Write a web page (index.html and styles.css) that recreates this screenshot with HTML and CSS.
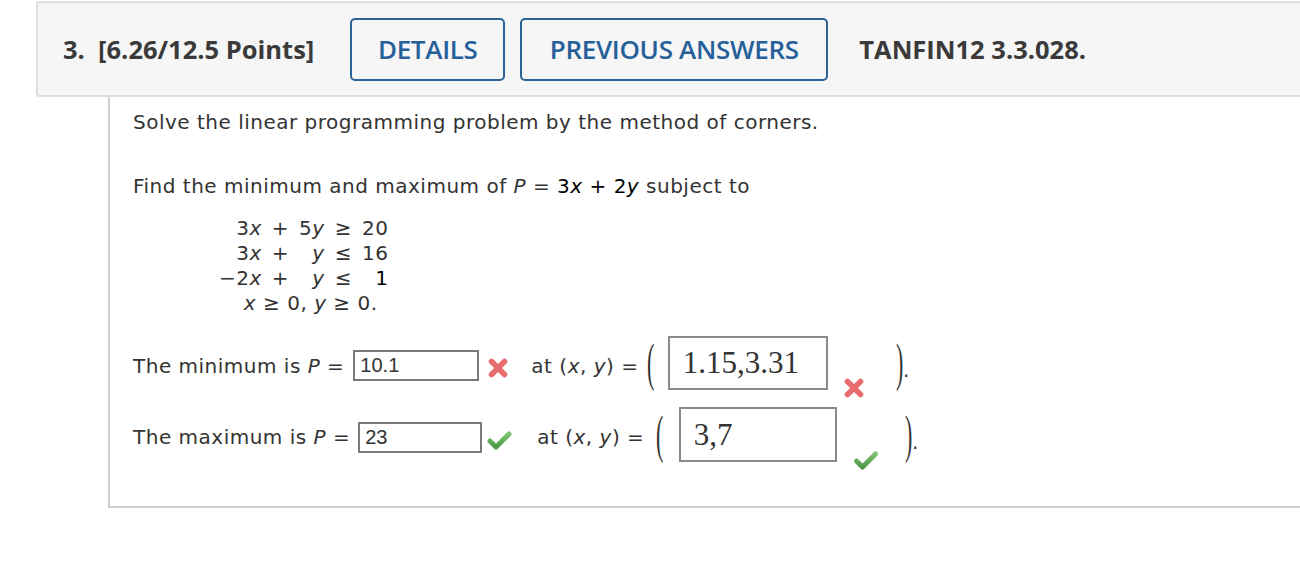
FILE: index.html
```html
<!DOCTYPE html>
<html>
<head>
<meta charset="utf-8">
<link rel="stylesheet" href="styles.css">
</head>
<body>
<div class="page">
  <div class="header">
    <div class="title">3.&nbsp; [6.26/12.5 Points]</div>
    <div class="btn btn-details">DETAILS</div>
    <div class="btn btn-prev">PREVIOUS ANSWERS</div>
    <div class="code">TANFIN12 3.3.028.</div>
  </div>
  <div class="content">
    <p class="line intro">Solve the linear programming problem by the method of corners.</p>
    <p class="line find">Find the minimum and maximum of <i>P</i> = <span class="m">3<i>x</i> + 2<i>y</i></span> subject to</p>
    <div class="cons">
      <span class="c1">3<i>x</i></span><span class="c2">+</span><span class="c3">5<i>y</i></span><span class="c4">≥</span><span class="c5">20</span>
      <span class="c1">3<i>x</i></span><span class="c2">+</span><span class="c3"><i>y</i></span><span class="c4">≤</span><span class="c5">16</span>
      <span class="c1">−2<i>x</i></span><span class="c2">+</span><span class="c3"><i>y</i></span><span class="c4">≤</span><span class="c5 blk">1</span>
      <span class="call"><i>x</i> ≥ 0, <i>y</i> ≥ 0.</span>
    </div>
    <div class="ansrow row-min">
      <span class="lbl">The minimum is <i>P</i> =</span>
      <span class="inp inp-min">10.1</span>
      <span class="ico ico-x1"><svg width="22" height="22" viewBox="0 0 22 22"><path d="M4.5 4.5 L17.5 17.5 M17.5 4.5 L4.5 17.5" stroke="#e65b5d" stroke-width="5.5" stroke-linecap="round" fill="none" opacity="0.9"/></svg></span>
      <span class="at">at (<i>x</i>, <i>y</i>) =</span>
      <span class="paren po">(</span>
      <span class="box box-min">1.15,3.31</span>
      <span class="ico ico-x2"><svg width="22" height="22" viewBox="0 0 22 22"><path d="M4.5 4.5 L17.5 17.5 M17.5 4.5 L4.5 17.5" stroke="#e65b5d" stroke-width="5.5" stroke-linecap="round" fill="none" opacity="0.9"/></svg></span>
      <span class="paren pc">)</span><span class="dot">.</span>
    </div>
    <div class="ansrow row-max">
      <span class="lbl">The maximum is <i>P</i> =</span>
      <span class="inp inp-max">23</span>
      <span class="ico ico-c1"><svg width="27" height="22" viewBox="0 0 27 22"><defs><linearGradient id="g1" x1="0" y1="0" x2="0" y2="1"><stop offset="0" stop-color="#7cc06f"/><stop offset="1" stop-color="#4f9a4a"/></linearGradient></defs><path d="M4 12 L10 18 L23 5" stroke="url(#g1)" stroke-width="5" stroke-linecap="round" stroke-linejoin="round" fill="none"/></svg></span>
      <span class="at">at (<i>x</i>, <i>y</i>) =</span>
      <span class="paren po">(</span>
      <span class="box box-max">3,7</span>
      <span class="ico ico-c2"><svg width="28" height="22" viewBox="0 0 27 22"><defs><linearGradient id="g2" x1="0" y1="0" x2="0" y2="1"><stop offset="0" stop-color="#7cc06f"/><stop offset="1" stop-color="#4f9a4a"/></linearGradient></defs><path d="M4 12 L10 18 L23 5" stroke="url(#g2)" stroke-width="5" stroke-linecap="round" stroke-linejoin="round" fill="none"/></svg></span>
      <span class="paren pc">)</span><span class="dot">.</span>
    </div>
  </div>
</div>
</body>
</html>
```
FILE: styles.css
```css
html, body {
  margin: 0;
  padding: 0;
  background: #ffffff;
  overflow: hidden;
}
.page {
  width: 1330px;
  padding-top: 1px;
}
.header {
  margin-left: 36px;
  height: 92px;
  background: #f6f6f6;
  border: 2px solid #dedede;
  border-radius: 3px;
  display: flex;
  align-items: center;
  font-family: "Open Sans", sans-serif;
}
.title {
  margin-left: 25px;
  font-weight: 700;
  font-size: 25.5px;
  color: #3a3a3a;
}
.btn {
  box-sizing: border-box;
  height: 63px;
  border: 2px solid #2b6397;
  border-radius: 5px;
  display: flex;
  align-items: center;
  justify-content: center;
  color: #25609a;
  font-weight: 600;
  font-size: 26px;
  letter-spacing: -0.3px;
}
.btn-details {
  margin-left: 36px;
  width: 155px;
}
.btn-prev {
  margin-left: 15px;
  width: 308px;
}
.code {
  margin-left: 31px;
  font-weight: 700;
  font-size: 25.5px;
  color: #3a3a3a;
}
.content {
  margin-left: 108px;
  height: 411px;
  border-left: 2px solid #d0d0d0;
  border-bottom: 2px solid #d0d0d0;
  padding-left: 23px;
  box-sizing: border-box;
  font-family: "DejaVu Sans", Verdana, sans-serif;
  font-size: 20px;
  letter-spacing: 0.5px;
  color: #333333;
  padding-top: 13px;
}
.line {
  margin: 0;
  line-height: 25px;
}
.find {
  margin-top: 39px;
}
.m {
  color: #000;
}
i {
  font-style: italic;
}
.cons {
  margin-top: 17px;
  margin-left: 86px;
  display: grid;
  grid-template-columns: auto auto auto auto auto;
  justify-content: start;
  column-gap: 10px;
  line-height: 25px;
}
.c1, .c3, .c5 {
  text-align: right;
}
.c2, .c4 {
  text-align: center;
}
.blk {
  color: #000;
}
.call {
  grid-column: 1 / 6;
  text-align: center;
  padding-left: 14px;
}
.ansrow {
  display: flex;
  align-items: center;
}
.row-min {
  margin-top: 20px;
  height: 54px;
}
.row-max {
  margin-top: 17px;
  height: 55px;
}
.lbl {
  white-space: nowrap;
  margin-top: 5px;
}
.inp {
  box-sizing: border-box;
  height: 31px;
  border: 2px solid #7a7a7a;
  font-family: "Liberation Sans", Arial, sans-serif;
  font-size: 20px;
  letter-spacing: 0;
  color: #333;
  padding: 2px 5px;
  line-height: 23px;
  background: #fff;
  margin-top: 5px;
}
.inp-min {
  width: 126px;
  margin-left: 9px;
}
.inp-max {
  width: 124px;
  margin-left: 8px;
}
.ico {
  display: flex;
}
.ico-x1 {
  margin-left: 8px;
  margin-top: 10px;
}
.ico-c1 {
  margin-left: 4px;
  margin-top: 10px;
}
.at {
  white-space: nowrap;
  margin-top: 5px;
}
.ico-x1 + .at {
  margin-left: 22px;
}
.ico-c1 + .at {
  margin-left: 24px;
}
.paren {
  font-family: "Liberation Serif", serif;
  font-size: 40px;
  color: #333;
  transform: scale(0.55, 1.3);
  font-weight: 400;
  line-height: 40px;
  letter-spacing: 0;
}
.po {
  margin-left: 6px;
}
.box {
  box-sizing: border-box;
  border: 2px solid #8a8a8a;
  font-family: "Liberation Serif", "Times New Roman", serif;
  font-size: 31px;
  letter-spacing: 0;
  color: #333;
  display: flex;
  align-items: center;
  padding-left: 13px;
  background: #fff;
}
.box-min {
  width: 160px;
  height: 54px;
  margin-left: 10px;
}
.row-max .po {
  margin-left: 9px;
}
.box-max {
  width: 158px;
  height: 55px;
  margin-left: 12px;
}
.ico-x2 {
  align-self: flex-end;
  margin-left: 15px;
  margin-bottom: -9px;
}
.ico-c2 {
  align-self: flex-end;
  margin-left: 15px;
  margin-bottom: -9px;
}
.pc {
  margin-left: 28px;
}
.ico-c2 + .pc {
  margin-left: 22px;
}
.dot {
  margin-left: -3px;
  align-self: center;
  padding-top: 14px;
}
```
